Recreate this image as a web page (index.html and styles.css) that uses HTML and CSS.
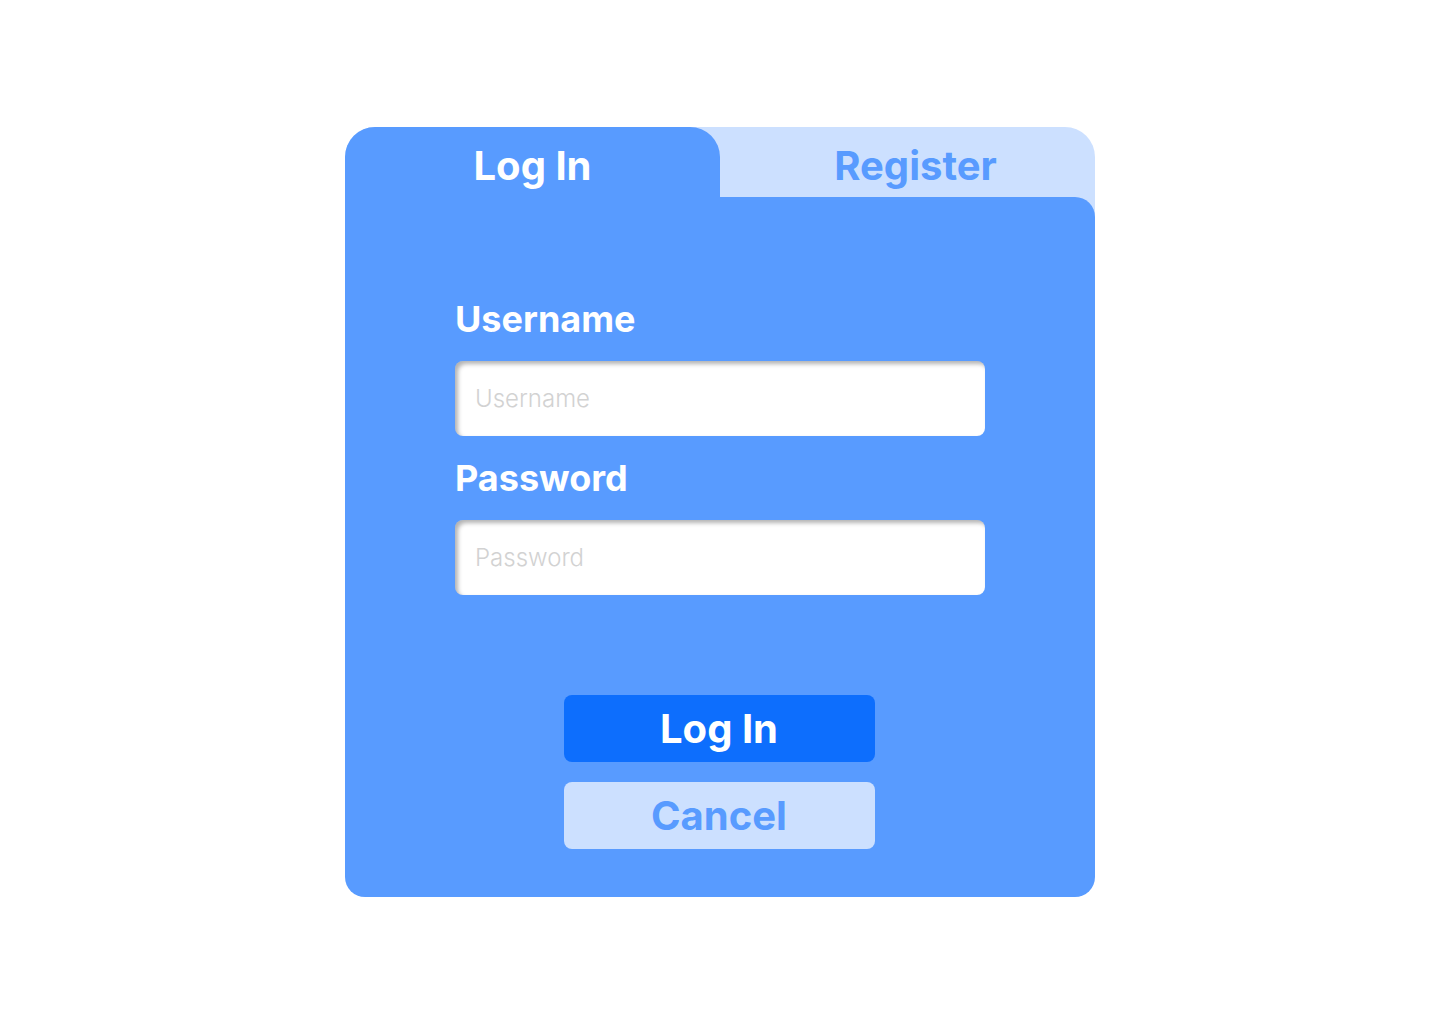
FILE: index.html
```html
<!DOCTYPE html>
<html lang="en">
<head>
  <meta charset="UTF-8" />
  <meta name="viewport" content="width=device-width, initial-scale=1.0"/>
  <title>Log In</title>
  <link rel="stylesheet" href="styles.css">
</head>
<body>
  <div class="card">
    <div class="tabs">
      <div class="tab active">Log In</div>
      <div class="tab register">Register</div>
    </div>
    <form class="panel">
      <label for="username">Username</label>
      <input type="text" id="username" placeholder="Username" />
      <label for="password">Password</label>
      <input type="password" id="password" placeholder="Password" />
      <div class="actions">
        <button type="button" class="btn primary">Log In</button>
        <button type="button" class="btn secondary">Cancel</button>
      </div>
    </form>
  </div>
</body>
</html>
```

FILE: styles.css
```css
body { margin: 0; background: #fff; font-family: Inter, "Noto Sans", sans-serif; }
.card {
  width: 750px;
  margin: 127px auto 0;
  border-radius: 30px 30px 20px 20px;
  background: linear-gradient(#cce0ff 0 120px, transparent 120px);
}
.tabs { display: flex; height: 70px; }
.tab {
  width: 50%;
  box-sizing: border-box;
  padding-top: 15px;
  text-align: center;
  font-size: 40px;
  font-weight: 700;
  line-height: 1.2;
}
.tab.active { background: #589bff; color: #fff; border-radius: 30px 30px 0 0; }
.tab.register { color: #589bff; padding-left: 16px; }
.panel {
  display: flex;
  flex-direction: column;
  align-items: center;
  background: #589bff;
  border-radius: 0 20px 20px 20px;
  padding: 100px 0 48px;
}
label {
  width: 530px;
  color: #fff;
  font-size: 36px;
  font-weight: 700;
  line-height: 44px;
  margin-bottom: 20px;
}
input {
  box-sizing: border-box;
  width: 530px;
  height: 75px;
  margin: 0 0 20px;
  padding: 0 20px;
  border: none;
  border-radius: 8px;
  background: #fff;
  box-shadow: inset 3px 3px 4px rgba(0, 0, 0, 0.3);
  font-family: Inter, "Noto Sans", sans-serif;
  font-size: 24px;
  font-weight: 300;
  color: #333;
  outline: none;
}
input::placeholder { color: #d2d2d2; }
.actions { display: flex; flex-direction: column; gap: 20px; margin-top: 80px; margin-right: 2px; }
.btn {
  width: 311px;
  height: 67px;
  border: none;
  border-radius: 8px;
  font-family: Inter, "Noto Sans", sans-serif;
  font-size: 40px;
  font-weight: 700;
  line-height: 1;
  cursor: pointer;
}
.btn.primary { background: #0d6efd; color: #fff; }
.btn.secondary { background: #cce0ff; color: #589bff; }
```
